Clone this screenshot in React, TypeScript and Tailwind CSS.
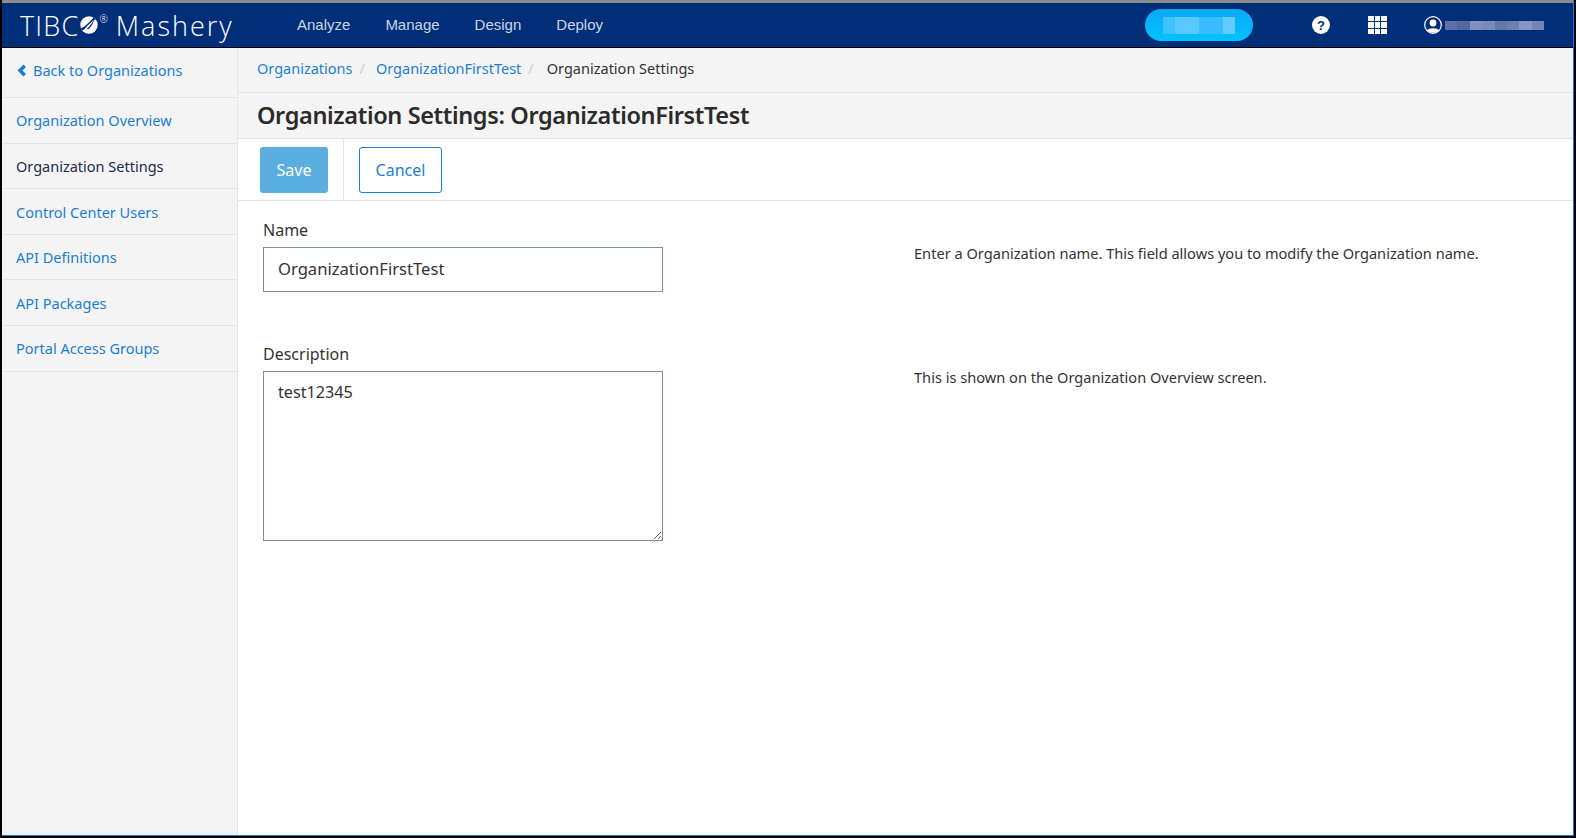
const sideLinks = [
  { label: "Organization Overview" },
  { label: "Organization Settings", active: true },
  { label: "Control Center Users" },
  { label: "API Definitions" },
  { label: "API Packages" },
  { label: "Portal Access Groups" },
];

const pillBlocks = ["#41c0ff", "#5ac8ff", "#5ac8ff", "#38bcff", "#38bcff", "#62ccff"];
const userBlocks = ["#5f70a8", "#56689f", "#8490bb", "#7d8ab6", "#6476ab", "#6f7fb0", "#8a96c0", "#7484b3"];

function TibcoBall() {
  return (
    <svg width="18" height="18" viewBox="0 0 18 18" className="ml-[1px] shrink-0">
      <circle cx="9" cy="9" r="8.7" fill="#fff" />
      <path d="M0.8 12.5 C4 11.5 9 7 13.6 1.6 L15.8 3.4 C12 4.5 8 9 5 12.5 C4 13.6 2.5 14.5 1.6 14.2 Z" fill="#012e78" />
      <path d="M7 13 C9.5 10.5 12 7 14.5 3.8 C13.5 7 11.5 10 9 13 Z" fill="#012e78" />
    </svg>
  );
}

function Header() {
  return (
    <header className="flex h-[44px] shrink-0 items-center bg-[#012e78] font-['Liberation_Sans',sans-serif] text-white">
      <div className="ml-[18px] flex w-[277px] items-center font-['Open_Sans',sans-serif] text-[27px] leading-none font-light">
        <span className="tracking-[1.2px]">TIBC</span>
        <TibcoBall />
        <span className="mb-3 ml-[1px] text-[10px]">®</span>
        <span className="ml-[8px] tracking-[2px]">Mashery</span>
      </div>
      <nav className="flex gap-[35px] text-[15px] text-[#ccd5e4]">
        <a>Analyze</a>
        <a>Manage</a>
        <a>Design</a>
        <a>Deploy</a>
      </nav>
      <div className="ml-auto flex items-center">
        <div className="flex h-8 w-[108px] items-center justify-center rounded-full bg-gradient-to-b from-[#0aa8f5] to-[#00c3ff]">
          <div className="flex h-[17px] w-[72px]">
            {pillBlocks.map((color, i) => (
              <span key={i} className="flex-1" style={{ backgroundColor: color }} />
            ))}
          </div>
        </div>
        <div className="ml-[59px] flex h-[18px] w-[18px] items-center justify-center rounded-full bg-white text-[13px] leading-none font-bold text-[#012e78]">
          ?
        </div>
        <div className="ml-[38px] grid h-[18px] w-[19px] grid-cols-3 gap-[1px]">
          {Array.from({ length: 9 }).map((_, i) => (
            <span key={i} className="bg-white" />
          ))}
        </div>
        <svg width="18" height="18" viewBox="0 0 18 18" className="ml-[37px]">
          <circle cx="9" cy="9" r="8.3" fill="none" stroke="#fff" strokeWidth="1.2" />
          <circle cx="9" cy="7" r="3.4" fill="#fff" />
          <path d="M3 14.5 C4 11.5 14 11.5 15 14.5 C13 17.5 5 17.5 3 14.5 Z" fill="#fff" />
        </svg>
        <div className="mr-[29px] ml-[3px] flex h-[9px] w-[99px]">
          {userBlocks.map((color, i) => (
            <span key={i} className="flex-1" style={{ backgroundColor: color }} />
          ))}
        </div>
      </div>
    </header>
  );
}

function Sidebar() {
  return (
    <aside className="flex w-[236px] shrink-0 flex-col border-r border-[#e6e6e6] bg-[#f4f4f4] text-[14.5px] text-[#1a7fd4]">
      <a className="flex h-[50px] items-center border-b border-[#e3e3e3] pb-[4px] pl-[14px]">
        <svg width="11" height="13" viewBox="0 0 11 13" className="mr-[6px]">
          <path d="M7.5 0.5 L10 3 L6.5 6.5 L10 10 L7.5 12.5 L1.5 6.5 Z" fill="#1a7fd4" />
        </svg>
        Back to Organizations
      </a>
      {sideLinks.map((link) => (
        <a
          key={link.label}
          className={`flex h-[45.6px] items-center border-b border-[#e3e3e3] pt-[2px] pl-[14px] ${link.active ? "text-[#1c2b4a]" : ""}`}
        >
          {link.label}
        </a>
      ))}
    </aside>
  );
}

function Field({ label, help, children }: { label: string; help: string; children: React.ReactNode }) {
  return (
    <div className="flex">
      <div className="w-[400px]">
        <label className="mb-[5px] block text-[16px] leading-[24px] text-[#333]">{label}</label>
        {children}
      </div>
      <p className="mt-[23px] ml-[251px] text-[14.6px] leading-[24px] text-[#333]">{help}</p>
    </div>
  );
}

export default function App() {
  return (
    <div className="h-[838px] w-[1576px] overflow-hidden border-x-2 border-b-2 border-black bg-white font-['Noto_Sans',sans-serif]">
      <div className="flex h-full flex-col border-r border-b border-[#1f78c8]">
        <div className="h-[3px] shrink-0 bg-[#8c8c8c]" />
        <Header />
        <div className="h-[1px] shrink-0 bg-black" />
        <div className="flex min-h-0 flex-1">
          <Sidebar />
          <main className="flex min-w-0 flex-1 flex-col">
            <div className="flex h-[45px] shrink-0 items-center border-b border-[#e3e3e3] bg-[#f4f4f4] pb-[2px] pl-[19px] text-[14.5px] text-[#1a7fd4]">
              <a>Organizations</a>
              <span className="mx-[7px] text-[#ccc]">/</span>
              <a className="ml-[4px]">OrganizationFirstTest</a>
              <span className="mx-[7px] text-[#ccc]">/</span>
              <span className="ml-[6px] text-[#333]">Organization Settings</span>
            </div>
            <div className="flex h-[46px] shrink-0 items-center border-b border-[#e3e3e3] bg-[#f4f4f4] pl-[19px] text-[23.5px] font-semibold tracking-[-0.37px] text-[#2b2b2b]">
              Organization Settings: OrganizationFirstTest
            </div>
            <div className="flex h-[62px] shrink-0 items-center border-b border-[#e3e3e3]">
              <button className="ml-[22px] h-[46px] w-[68px] rounded-[3px] bg-[#5aaee0] text-[16px] text-white">Save</button>
              <div className="ml-[15px] h-full w-[1px] bg-[#e3e3e3]" />
              <button className="ml-[15px] h-[46px] w-[83px] rounded-[3px] border border-[#1a7fd4] text-[16px] text-[#1a7fd4]">Cancel</button>
            </div>
            <div className="flex flex-col gap-[50px] pt-[17px] pl-[25px]">
              <Field label="Name" help="Enter a Organization name. This field allows you to modify the Organization name.">
                <input
                  readOnly
                  value="OrganizationFirstTest"
                  className="h-[45px] w-[400px] border border-[#7f8ca6] px-[14px] pb-[2px] text-[16.6px] text-[#333] outline-none"
                />
              </Field>
              <Field label="Description" help="This is shown on the Organization Overview screen.">
                <textarea
                  readOnly
                  value="test12345"
                  className="block h-[170px] w-[400px] border border-[#7f8ca6] px-[14px] py-[8px] text-[16.2px] text-[#333] outline-none"
                />
              </Field>
            </div>
          </main>
        </div>
      </div>
    </div>
  );
}
